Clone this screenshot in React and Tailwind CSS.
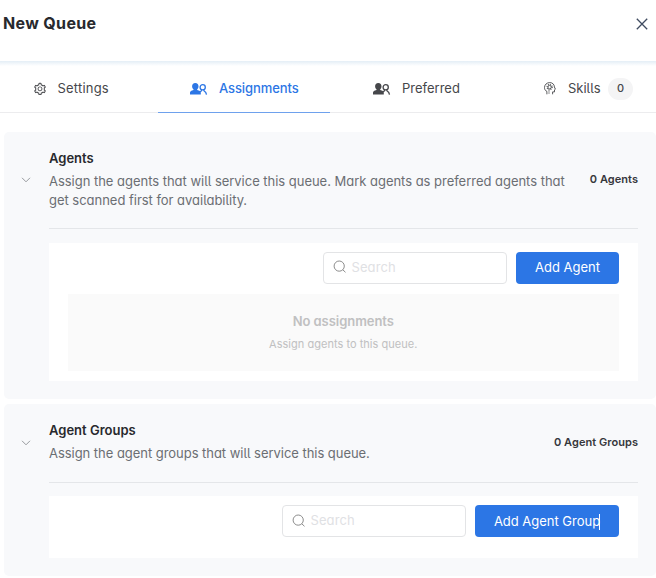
import React from "react";
import { AiOutlineSetting } from "react-icons/ai";

function PeopleIcon() {
  return (
    <svg width="18" height="12" viewBox="0 0 18 12" fill="none">
      <path
        fill="currentColor"
        d="M5.3 0C7.4 0 8.5 1.3 8.5 3.2C8.5 4.6 8 5.6 7.2 6.2V6.9L9.4 7.8C10.4 8.3 10.8 9 10.8 9.9V11.6H0V9.9C0 9 0.4 8.3 1.3 7.8L3.5 6.9V6.2C2.6 5.6 2.1 4.6 2.1 3.2C2.1 1.3 3.2 0 5.3 0Z"
      />
      <circle cx="12.7" cy="4.2" r="2.6" stroke="currentColor" strokeWidth="1.3" />
      <path d="M10 8.9L11.5 7.7V6.8M13.9 6.8V7.7C15.6 8.6 16.3 9.4 16.5 11.6" stroke="currentColor" strokeWidth="1.3" />
    </svg>
  );
}

function SkillsIcon() {
  return (
    <svg width="12" height="13" viewBox="0 0 12 13" fill="none" stroke="currentColor" strokeWidth="0.9">
      <path d="M2.9 12.3V9.4C1.2 8.7 0.5 7.2 0.5 5.6C0.5 2.7 2.8 0.6 5.7 0.6C8.6 0.6 10.4 2.5 10.4 5L11.4 7.2L10.5 7.8V9.9H8.6V12.3" />
      <circle cx="5.6" cy="5.1" r="1.7" />
      <circle cx="5.6" cy="5.1" r="2.6" strokeWidth="1.1" strokeDasharray="1.02 1.02" />
      <path d="M5 8V12" strokeWidth="0.6" />
    </svg>
  );
}

function SearchIcon() {
  return (
    <svg width="14" height="14" viewBox="0 0 14 14" fill="none" stroke="currentColor" strokeWidth="1" className="-mt-px">
      <circle cx="6.2" cy="6.1" r="5.1" />
      <path d="M9.8 9.8L12.5 12.3" />
    </svg>
  );
}

function ChevronDown() {
  return (
    <svg width="10" height="6" viewBox="0 0 10 6" fill="none" stroke="currentColor" strokeWidth="0.9" className="shrink-0 text-[#8c8f94]">
      <path d="M1 0.8L5 4.8L9 0.8" />
    </svg>
  );
}

function CloseIcon() {
  return (
    <svg width="12" height="12" viewBox="0 0 12 12" fill="none" stroke="currentColor" strokeWidth="1.3" className="mt-[5px] text-[#3f4b60]">
      <path d="M0.8 0.8L11.2 11.2M11.2 0.8L0.8 11.2" />
    </svg>
  );
}

function SearchBox() {
  return (
    <div className="flex h-8 w-[184px] items-center rounded border border-[#e3e4e6] bg-white pl-[9px] text-[#8c8c8c]">
      <SearchIcon />
      <span className="ml-[5px] text-[13px] tracking-[0.1px] text-[#dfe1e4]">Search</span>
    </div>
  );
}

function Panel({ title, titleClass, description, descriptionClass, count, headerClass, bodyClass, children }) {
  return (
    <section className="ml-[3.5px] rounded-[5px] bg-[#f8f9fb] pr-[18px] pl-[17.5px]">
      <div className={headerClass}>
        <ChevronDown />
        <div className="ml-[18px] flex h-full flex-1 items-center justify-between border-b border-[#e4e6e9]">
          <div className="h-full">
            <h2 className={titleClass}>{title}</h2>
            <p className={descriptionClass}>{description}</p>
          </div>
          <span className="text-[11px] font-semibold tracking-[0.05px] whitespace-nowrap text-[#36373b]">{count}</span>
        </div>
      </div>
      <div className={bodyClass}>{children}</div>
    </section>
  );
}

export default function App() {
  return (
    <div className="h-[578px] w-[656px] overflow-hidden bg-white font-['Inter','Noto_Sans',sans-serif] [font-feature-settings:'cv11','cv05']">
      <header className="flex h-[61px] justify-between pt-[13px] pr-[8px] pl-[3px] [font-feature-settings:normal]">
        <h1 className="text-[16px] leading-[21px] font-bold tracking-[0.35px] text-[#28292d]">New Queue</h1>
        <CloseIcon />
      </header>
      <div className="h-[5px] bg-linear-to-b from-[#e4eef6] to-white" />
      <nav className="flex h-[47px] border-b border-[#ececee] pb-px text-[13px] text-[#46474b]">
        <div className="flex w-[158px] items-center pl-[33px]">
          <AiOutlineSetting size={14} />
          <span className="ml-[10.5px] tracking-[0.2px]">Settings</span>
        </div>
        <div className="-mb-[2px] flex w-[172px] items-center border-b border-[#6ea1ed] pl-[32px] font-medium text-[#2c76e5]">
          <PeopleIcon />
          <span className="ml-[11px] tracking-[-0.1px]">Assignments</span>
        </div>
        <div className="flex w-[214px] items-center pl-[43px]">
          <PeopleIcon />
          <span className="ml-[11px]">Preferred</span>
        </div>
        <div className="flex items-center">
          <SkillsIcon />
          <span className="ml-[12px]">Skills</span>
          <span className="ml-[7.5px] flex h-[22px] w-[25px] items-center justify-center rounded-full bg-[#f4f4f5] text-[11px] font-medium">0</span>
        </div>
      </nav>
      <main className="flex flex-col gap-[5px] pt-[18.5px]">
        <Panel
          title="Agents"
          titleClass="pt-[17.5px] text-[13px] leading-[18px] font-semibold text-[#28292d]"
          description={"Assign the agents that will service this queue. Mark agents as preferred agents that\nget scanned first for availability."}
          descriptionClass="mt-[5px] text-[13px] leading-[19px] tracking-[-0.025px] whitespace-pre text-[#6b6e73]"
          count="0 Agents"
          headerClass="flex h-[97px] items-center"
          bodyClass="pt-[14px] pb-[18px] pl-[28px]"
        >
          <div className="h-[138px] bg-white pt-[9px] pr-[19px] pl-[18.5px]">
            <div className="flex justify-end gap-[9.5px]">
              <SearchBox />
              <button className="h-8 w-[103px] rounded bg-[#2c76e5] text-[13px] text-white">Add Agent</button>
            </div>
            <div className="mt-[10px] flex h-[77px] flex-col items-center bg-[#fafafa] pt-[17px] text-[#c0c0c1]">
              <strong className="text-[13px] leading-[20px] font-semibold tracking-[-0.05px]">No assignments</strong>
              <span className="mt-[4px] text-[11px] leading-[18px] tracking-[0.03px]">Assign agents to this queue.</span>
            </div>
          </div>
        </Panel>
        <Panel
          title="Agent Groups"
          titleClass="pt-[17.5px] text-[13px] leading-[18px] font-semibold text-[#28292d]"
          description="Assign the agent groups that will service this queue."
          descriptionClass="mt-[5px] text-[13px] leading-[19px] tracking-[-0.04px] whitespace-pre text-[#6b6e73]"
          count="0 Agent Groups"
          headerClass="flex h-[79px] items-center"
          bodyClass="pt-[13px] pb-[18.5px] pl-[28px]"
        >
          <div className="flex h-[62px] justify-end gap-[9.5px] bg-white pt-[9.5px] pr-[19px] pl-[18.5px]">
            <SearchBox />
            <button className="flex h-8 w-[144px] items-center justify-center rounded bg-[#2c76e5] pt-px text-[13px] tracking-[-0.02px] text-white">
              Add Agent Group<span className="-ml-px h-4 w-px bg-white" />
            </button>
          </div>
        </Panel>
      </main>
    </div>
  );
}
